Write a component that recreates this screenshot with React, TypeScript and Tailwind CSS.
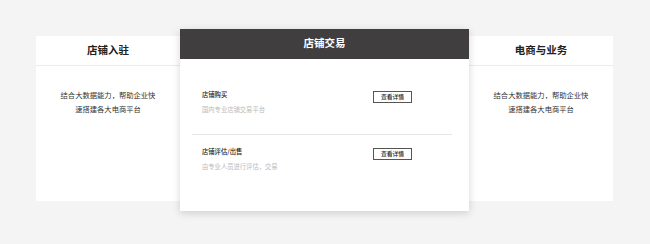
const font = "font-['Liberation_Serif','Noto_Sans_CJK_SC',serif]";

function SideCard({ title }: { title: string }) {
  return (
    <div className="mt-[7px] h-[165px] w-[144px] bg-white">
      <div className="flex h-[30px] items-center justify-center border-b border-[#ececec]">
        <h2 className={`${font} text-[10.5px] font-bold text-[#222]`}>{title}</h2>
      </div>
      <div className="pt-[22px] text-center text-[7.3px] leading-[14px] text-[#333]">
        <p>结合大数据能力，帮助企业快</p>
        <p>速搭建各大电商平台</p>
      </div>
    </div>
  );
}

function TradeItem({ title, desc }: { title: string; desc: string }) {
  return (
    <div className="flex items-start justify-between pl-[10px] pr-[40px]">
      <div>
        <p className="text-[6.3px] font-medium leading-[12px] text-[#222]">{title}</p>
        <p className="mt-[3px] text-[6.3px] leading-[12px] text-[#bbb]">{desc}</p>
      </div>
      <button className="mt-[2px] flex h-[12px] w-[39px] items-center justify-center border border-[#555] bg-white text-[5.8px] font-medium leading-none text-[#222]">
        查看详情
      </button>
    </div>
  );
}

export default function App() {
  return (
    <div className="h-[244px] w-[650px] bg-[#f4f4f4] font-['Noto_Sans_CJK_SC',sans-serif]">
      <div className="flex items-start pl-[36px] pt-[29px]">
        <SideCard title="店铺入驻" />
        <div className="relative z-10 h-[182px] w-[289px] bg-white shadow-[0_2px_8px_rgba(0,0,0,0.16)]">
          <div className="flex h-[30px] items-center justify-center bg-[#403e3e]">
            <h2 className={`${font} text-[10.5px] font-bold text-white`}>店铺交易</h2>
          </div>
          <div className="pl-[12px] pr-[17px]">
            <div className="pb-[18px] pt-[30px]">
              <TradeItem title="店铺购买" desc="国内专业店铺交易平台" />
            </div>
            <div className="h-px bg-[#e6e6e6]" />
            <div className="pt-[11px]">
              <TradeItem title="店铺评估/出售" desc="由专业人员进行评估，交易" />
            </div>
          </div>
        </div>
        <SideCard title="电商与业务" />
      </div>
    </div>
  );
}
